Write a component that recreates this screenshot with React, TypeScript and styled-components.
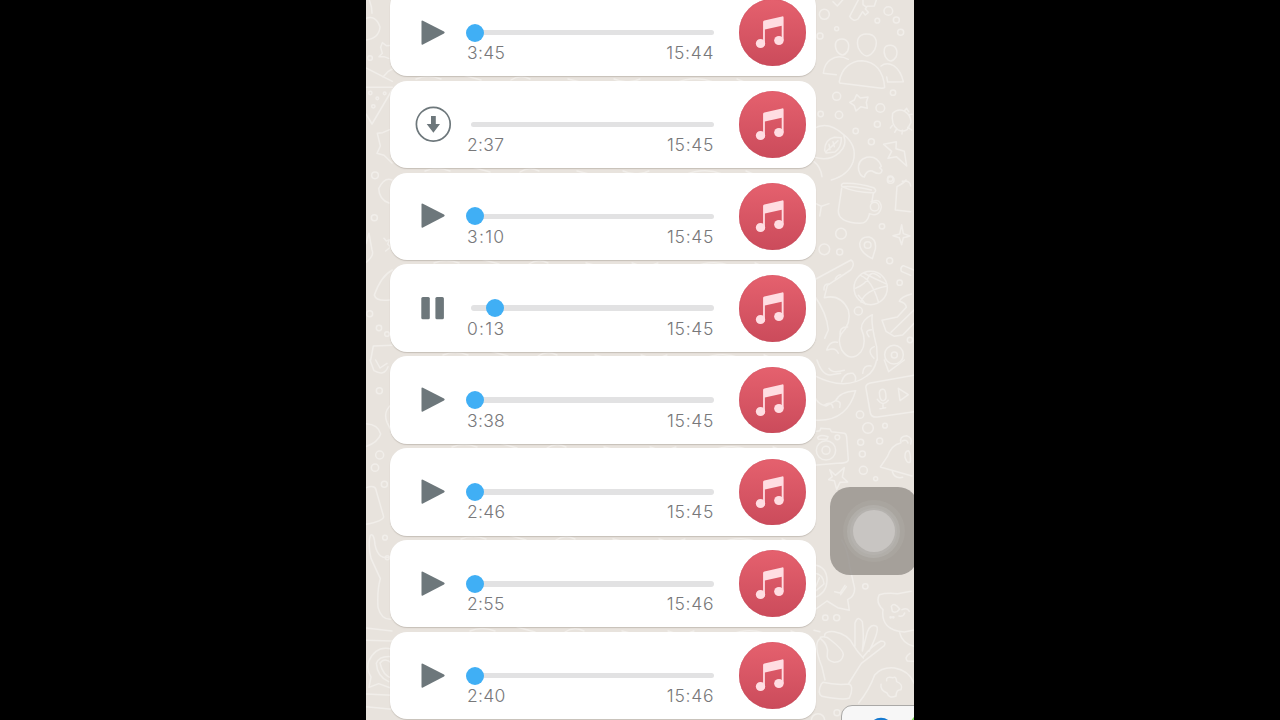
import React from "react";
import styled, { createGlobalStyle } from "styled-components";

const GlobalStyle = createGlobalStyle`
  * { box-sizing: border-box; }
  body { margin: 0; background: #000; overflow: hidden; }
`;

const Stage = styled.main`
  display: flex;
  justify-content: center;
  height: 720px;
  background: #000;
`;

const Phone = styled.section`
  position: relative;
  width: 548px;
  height: 720px;
  overflow: hidden;
  background: #e8e3dd;
  font-family: Inter, "Liberation Sans", sans-serif;
`;

const Wallpaper = styled.svg`
  position: absolute;
  inset: 0;
  width: 548px;
  height: 720px;
  fill: none;
  stroke: #f1eeea;
  stroke-linecap: round;
  stroke-linejoin: round;
`;

const Messages = styled.div`
  position: relative;
  display: flex;
  flex-direction: column;
  gap: 4.5px;
  width: 426px;
  margin: -11.1px 0 0 24px;
`;

const Card = styled.article`
  display: flex;
  flex: none;
  align-items: center;
  height: 87.36px;
  padding: 0 10px 0 24px;
  border-radius: 17px;
  background: #fff;
  box-shadow: 0 1px 1px rgba(110, 100, 90, 0.28);
`;

const Control = styled.button`
  display: flex;
  width: 38px;
  height: 38px;
  padding: 0;
  border: 0;
  background: none;
  svg { width: 38px; height: 38px; }
`;

const Player = styled.div`
  display: flex;
  flex-direction: column;
  width: 247px;
  margin-left: 15px;
  padding-top: 21.6px;
`;

const Slider = styled.div`
  display: flex;
  align-items: center;
  height: 18px;
  margin-left: 4.3px;
`;

const Track = styled.div`
  position: relative;
  width: 100%;
  height: 5.6px;
  border-radius: 3px;
  background: #e2e2e3;
`;

const Knob = styled.span<{ $at: number }>`
  position: absolute;
  left: ${(p) => p.$at}px;
  top: -6.2px;
  width: 18px;
  height: 18px;
  border-radius: 50%;
  background: #40aff5;
`;

const Times = styled.div`
  display: flex;
  justify-content: space-between;
  height: 20px;
  margin-top: 1.6px;
  color: #78787a;
  font-size: 17.5px;
  font-weight: 350;
  line-height: 20px;
`;

const Time = styled.span<{ $spacing: number }>`
  letter-spacing: ${(p) => p.$spacing}px;
  margin-right: ${(p) => 0.5 - p.$spacing}px;
`;

const Disc = styled.div`
  display: flex;
  width: 66.7px;
  height: 66.7px;
  margin-left: auto;
  border-radius: 50%;
  background: linear-gradient(#e5616e, #cb4b5b);
  box-shadow: inset 0 0 1px #bd4858;
  svg { width: 66.7px; height: 66.7px; }
`;

const AssistButton = styled.div`
  position: absolute;
  left: 463.7px;
  top: 486.7px;
  display: flex;
  align-items: center;
  justify-content: center;
  width: 88.5px;
  height: 88.8px;
  border-radius: 20px;
  background: rgba(147, 143, 137, 0.8);
`;

const Ring = styled.div<{ $size: number; $color: string }>`
  display: flex;
  align-items: center;
  justify-content: center;
  width: ${(p) => p.$size}px;
  height: ${(p) => p.$size}px;
  border-radius: 50%;
  background: ${(p) => p.$color};
`;

const CornerSheet = styled.div`
  position: absolute;
  left: 475px;
  top: 705.3px;
  width: 90px;
  height: 40px;
  overflow: hidden;
  border: 1px solid #aaa9a7;
  border-radius: 11px;
  background: #f7f7f7;
  svg { display: block; width: 88px; height: 38px; }
`;

type Kind = "play" | "pause" | "download";

function ControlIcon({ kind }: { kind: Kind }) {
  return (
    <svg viewBox="0 0 38 38" fill="#6d777b">
      {kind === "play" && (
        <path d="M8.9 6.7 30 17.6Q31.5 18.5 30 19.4L8.9 30.6Q7.5 31.2 7.5 29.8V7.5Q7.5 6 8.9 6.7Z" />
      )}
      {kind === "pause" && (
        <>
          <rect x="7.3" y="8" width="8.5" height="22.2" rx="1.5" />
          <rect x="21.4" y="8" width="8.5" height="22.2" rx="1.5" />
        </>
      )}
      {kind === "download" && (
        <>
          <circle cx="19.3" cy="19.2" r="16.9" fill="none" stroke="#6d777b" strokeWidth="1.7" />
          <path d="M17 11.1h4.8V19H26l-6.6 8.8L12.7 19H17Z" />
        </>
      )}
    </svg>
  );
}

function NoteIcon() {
  return (
    <svg viewBox="0 0 67 67" fill="#ffdde2">
      <path d="M24.2 23.2q0-1.3 1.3-1.7l17.8-4q1.5-.3 1.5 1.2v23h-1.9V27L26 30.6v16h-1.8Z" />
      <ellipse cx="21.6" cy="44.7" rx="4.7" ry="4.5" />
      <ellipse cx="40.1" cy="41.7" rx="4.8" ry="4.5" />
    </svg>
  );
}

type Dot = [number, number, number];

function Tile({ x, y, paths, dots }: { x: number; y: number; paths: string[]; dots: Dot[] }) {
  return (
    <g transform={`translate(${x} ${y}) scale(.33333)`} strokeWidth={4.5}>
      {paths.map((d, i) => <path key={i} d={d} />)}
      {dots.map(([cx, cy, r], i) => <circle key={i} cx={cx} cy={cy} r={r} />)}
    </g>
  );
}

const tiles: { x: number; y: number; paths: string[]; dots: Dot[] }[] = [
  {
    x: 448, y: 0,
    paths: [
      "M57 5 70 18 86 0M133 0 107 49Q117 67 132 57L146 35 154 45 163 37 154 27 159 19 181 18 187 0M147 0V14L155 20",
      "M158 102C131 102 127 122 133 144Q157 189 182 149C195 119 181 102 158 102Z",
      "M84 117C61 117 61 139 69 154Q86 176 101 153C109 132 100 117 84 117Z",
      "M229 136C207 136 208 155 214 170Q230 195 246 171C254 151 244 136 229 136Z",
      "M76 245C82 205 111 182 144 182C183 184 208 212 212 262Q211 265 203 265L82 250Q76 250 76 245Z",
      "M103 178Q73 162 50 179Q31 190 28 220L67 224M201 198Q218 185 239 197Q260 211 268 245L221 246L218 231",
      "M128 284 139 294 162 291 157 307 160 325 141 320 126 333 121 317 107 307 121 300Z",
      "M236 340Q252 324 272 334Q291 345 291 367L280 388Q267 398 251 389Q230 372 236 340M271 333 278 325 284 335M286 344 294 343M235 376 229 384M248 387 242 397M265 391 264 402M281 382 293 390",
      "M0 385Q42 361 88 403Q132 437 117 486Q103 525 52 540M0 471Q45 486 76 458Q101 435 89 405",
      "M32 451Q33 418 61 412L82 413Q83 441 63 456L36 459ZM36 455 72 422M45 433 48 449M57 425 61 440",
      "M209 433 247 425 246 446 271 454 278 498 247 470 222 475 233 454Z",
      "M174 513Q202 530 204 510L197 503L202 499Q190 466 158 472Q129 481 134 511Q140 531 151 531Q157 510 174 513",
      "M0 485Q20 500 24 530",
    ],
    dots: [[31, 43, 15], [68, 86, 6], [18, 108, 9], [223, 33, 13], [190, 62, 7], [247, 60, 9], [260, 97, 9], [68, 289, 12], [20, 342, 8], [75, 345, 11], [199, 324, 13], [237, 278, 8], [190, 373, 9], [125, 393, 8], [172, 425, 9], [229, 536, 8]],
  },
  {
    x: 448, y: 180,
    paths: [
      "M87 10Q128 7 179 23Q190 32 181 38Q126 39 84 20Q80 13 87 10ZM87 20Q120 17 172 30M83 25 73 92Q72 127 138 130Q160 130 166 103M178 40 174 63M171 66Q198 52 202 81Q196 112 166 101",
      "M249 20 244 90 290 95M249 20Q271 8 276 0M265 4Q289 0 290 18",
      "M0 68 22 79 45 71M22 79 17 108",
      "M175 236Q136 217 137 190Q142 168 166 171Q188 178 184 207Z",
      "M263 134 268 161 288 168 268 173 263 194 256 173 237 167 257 162Z",
      "M300 270 268 257Q258 260 262 274L290 286",
      "M0 300Q55 270 111 240Q126 249 110 270L40 316L31 353Q80 341 103 390Q114 428 81 463Q70 480 83 510Q110 550 141 515Q160 488 142 446Q142 420 175 404Q170 430 188 500L190 540",
      "M0 345Q39 400 43 450L32 475M40 510Q66 500 73 520M38 510Q47 482 70 487M79 468Q74 440 101 441M64 297Q69 285 80 284M30 330Q28 310 46 312M180 535Q156 510 181 500M173 449Q149 450 165 470",
      "M124 325Q156 312 164 290Q172 270 199 292M139 286Q173 299 193 365M149 279Q178 294 215 311M141 366Q153 331 217 319M133 346Q157 374 154 372",
      "M292 342Q262 350 256 364Q276 369 277 382L250 411 204 421 216 454 241 469 266 465 300 430M231 457 300 390",
    ],
    dots: [[81, 161, 16], [31, 208, 16], [77, 216, 9], [204, 139, 8], [182, 80, 13], [161, 195, 10], [227, 242, 9], [257, 308, 8], [170, 324, 50], [133, 393, 12], [288, 480, 8], [240, 524, 28], [241, 525, 9], [230, 0, 10]],
  },
  {
    x: 448, y: 360,
    paths: [
      "M0 46Q94 95 158 48Q181 34 188 0M9 0Q24 45 48 45L80 40M45 25Q55 42 91 31M83 65Q91 36 117 40 129 50 123 65M146 40Q148 14 171 18M211 0 224 35 271 0",
      "M0 180Q97 189 125 92Q77 95 65 122L36 138Q9 133 0 105M30 136Q52 120 57 143M65 122Q84 123 77 142",
      "M300 46 169 69Q153 73 156 85L169 159Q172 173 190 171L300 155",
      "M196 98Q198 86 208 88Q215 89 216 110Q216 121 207 122Q197 122 196 98ZM190 118Q207 141 223 121M207 133V145M198 146 215 143M253 85 283 104 258 122Z",
      "M0 215 18 212 20 205 48 207 52 215 91 220Q97 222 98 232L103 300Q101 310 70 310L0 316M11 233Q16 222 42 230L39 238 13 238Z",
      "M47 329 64 346 91 323 85 351 101 366 78 367 68 388 61 362 44 359 55 350Z",
      "M260 249Q233 254 220 290L199 321 294 348M235 335Q242 357 266 352M261 248Q255 229 278 227 297 233 290 252M273 291Q272 273 283 272 291 279 289 306Q278 312 273 291M265 243Q278 236 282 249",
    ],
    dots: [[138, 164, 11], [162, 204, 16], [213, 197, 7], [140, 247, 9], [197, 243, 9], [145, 282, 9], [148, 331, 12], [185, 356, 6], [36, 271, 29], [36, 271, 12], [70, 232, 7]],
  },
  {
    x: 448, y: 540,
    paths: [
      "M0 74Q40 80 39 123Q37 161 0 173M0 99Q29 103 30 132L0 157M16 113 4 143M83 0Q102 29 107 79L122 145Q122 170 101 179L106 211 71 203 39 183 0 211M62 155 78 159 93 136M80 164 97 140",
      "M0 271 18 275M32 287Q31 273 61 275Q103 283 117 314Q128 333 148 354M123 318Q123 286 123 249Q131 224 145 245 151 289 145 332M145 333 160 276Q169 250 188 259 197 271 165 334M148 350Q176 315 201 303 218 304 211 317L142 370 103 432M19 292Q36 287 50 300 88 329 88 344 84 368 60 367 36 361 40 342 45 316 19 295Q-5 309 24 381L33 420M27 427Q64 436 106 432 121 440 106 474 90 482 24 469 8 460 22 432Z",
      "M291 154 251 161Q217 158 196 164 184 187 207 209 199 270 271 276L300 270M257 278Q264 310 300 319M232 199Q241 185 257 207Q246 222 235 214ZM264 209Q280 202 286 214M272 219Q268 232 255 228M288 340Q270 352 280 363L300 364",
      "M134 489Q166 449 182 405Q204 380 242 384Q286 392 300 430",
      "M218 422Q215 408 237 413 247 407 248 425 268 433 261 449 247 448 246 468 225 477 219 459 198 450 201 433 218 435Z",
    ],
    dots: [[154, 139, 8], [34, 233, 8], [68, 233, 9], [69, 518, 9], [230, 232, 2], [238, 232, 2], [12, 541, 20]],
  },
  {
    x: -2, y: 0,
    paths: [
      "M6 55Q35 44 48 81Q45 115 6 120M16 0Q24 20 24 40M84 136 67 137 55 128 50 142 55 160 45 170 60 170 74 175M6 204 85 244M6 262H85M6 342 24 372 84 270M57 231 73 214 85 207M40 400 56 398 77 389M40 400 49 438 39 460 60 466 84 489M84 540Q61 530 44 566Q46 600 75 609M6 787Q32 767 24 750L15 700 6 731M85 810Q52 827 31 885Q36 905 76 900M20 1080 28 1038 84 1036M60 715 67 723 77 719 71 732 80 741 65 753",
    ],
    dots: [[18, 174, 7], [33, 526, 10], [31, 653, 9], [17, 941, 9], [45, 984, 8], [69, 1002, 7], [19, 279, 5], [28, 319, 5], [40, 295, 4], [62, 280, 4]],
  },
  {
    x: -2, y: 360,
    paths: [
      "M18 0 30 32Q61 50 72 20M35 0 48 24 69 10M84 132Q56 154 69 187L86 220M6 191Q43 193 50 222Q43 246 6 260M6 383Q34 374 36 390L59 470Q59 482 6 493M84 589Q43 605 33 554Q30 518 19 526Q11 551 21 595L49 656Q39 690 42 742 52 779 80 778M6 804 84 813M6 841 84 843M84 868Q37 854 14 904Q6 929 21 951L15 982 44 971 80 984M6 1040 84 1048M84 890Q46 886 37 910 40 950 74 965M6 1002 84 1006M84 910Q62 890 48 909 57 949 84 954",
    ],
    dots: [[46, 92, 9], [47, 285, 12], [33, 323, 11], [61, 373, 9], [63, 533, 7], [70, 593, 6]],
  },
];

const recordings: { kind: Kind; length: string; sent: string; at?: number }[] = [
  { kind: "play", length: "3:45", sent: "15:44", at: -5 },
  { kind: "download", length: "2:37", sent: "15:45" },
  { kind: "play", length: "3:10", sent: "15:45", at: -5 },
  { kind: "pause", length: "0:13", sent: "15:45", at: 14.3 },
  { kind: "play", length: "3:38", sent: "15:45", at: -5 },
  { kind: "play", length: "2:46", sent: "15:45", at: -5 },
  { kind: "play", length: "2:55", sent: "15:46", at: -5 },
  { kind: "play", length: "2:40", sent: "15:46", at: -5 },
];

// The narrow "1" gets extra tracking so that all durations share one width
const trackingOf = (time: string) =>
  time.length === 5 ? 0.75 : time.includes("1") ? 1.3 : 0.3;

export default function App() {
  return (
    <Stage>
      <GlobalStyle />
      <Phone>
        <Wallpaper viewBox="0 0 548 720">
          {tiles.map((t, i) => <Tile key={i} {...t} />)}
          {/* Doodle fragments visible in the gaps between messages */}
          {[76, 168, 260, 352, 444, 536, 628].map((y, i) => (
            <path
              key={y}
              strokeWidth={1.4}
              d={`M${50 + i * 9} ${y + 3}q12-5 25 0m22-4 18 5m30 0q9-6 19-1m38 0 16 4m30-4q14 6 26 0m35 4q20-8 38-1m24-3 12 5`}
            />
          ))}
        </Wallpaper>
        <Messages>
          {recordings.map((r, i) => (
            <Card key={i}>
              <Control aria-label={r.kind}><ControlIcon kind={r.kind} /></Control>
              <Player>
                <Slider><Track>{r.at !== undefined && <Knob $at={r.at} />}</Track></Slider>
                <Times>
                  <Time $spacing={trackingOf(r.length)}>{r.length}</Time>
                  <Time $spacing={trackingOf(r.sent)}>{r.sent}</Time>
                </Times>
              </Player>
              <Disc><NoteIcon /></Disc>
            </Card>
          ))}
        </Messages>
        <AssistButton>
          <Ring $size={62} $color="rgba(185,183,179,.22)">
            <Ring $size={53} $color="rgba(192,190,186,.38)">
              <Ring $size={47} $color="rgba(188,186,183,.4)">
                <Ring $size={42} $color="#c8c5c2" />
              </Ring>
            </Ring>
          </Ring>
        </AssistButton>
        <CornerSheet>
          <svg viewBox="0 0 88 38">
            <circle cx="39" cy="24" r="12.3" fill="#1579cf" />
            <circle cx="80" cy="20" r="12" fill="#80dc5a" />
          </svg>
        </CornerSheet>
      </Phone>
    </Stage>
  );
}
